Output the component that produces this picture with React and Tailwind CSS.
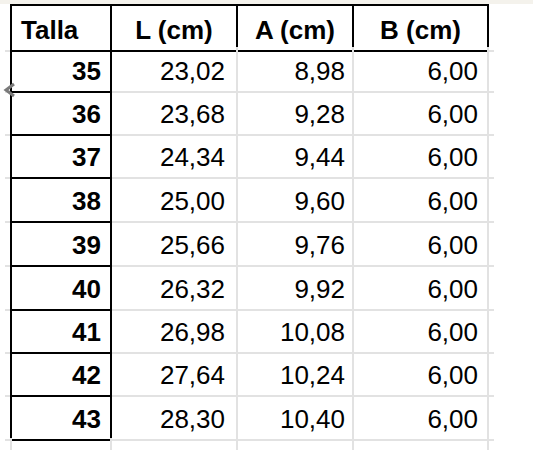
import React from "react";

const rows = [
  ["35", "23,02", "8,98", "6,00"],
  ["36", "23,68", "9,28", "6,00"],
  ["37", "24,34", "9,44", "6,00"],
  ["38", "25,00", "9,60", "6,00"],
  ["39", "25,66", "9,76", "6,00"],
  ["40", "26,32", "9,92", "6,00"],
  ["41", "26,98", "10,08", "6,00"],
  ["42", "27,64", "10,24", "6,00"],
  ["43", "28,30", "10,40", "6,00"],
];

const heights = ["h-[43px]", "h-[43px]", "h-[44px]", "h-[44px]", "h-[44px]", "h-[43px]", "h-[43px]", "h-[44px]", "h-[43px]"];

const grid = "grid grid-cols-[5px_102px_126px_116px_135px_5px]";

export default function App() {
  return (
    <div className="w-[533px] h-[468px] bg-white relative overflow-hidden text-black" style={{ fontFamily: '"Liberation Sans", Arial, sans-serif' }}>
      <div className="h-[4px] bg-[#f4f2ec]" />
      <div className="pl-[5px]">
        {/* header */}
        <div className={`${grid} h-[43px] text-[26px] font-bold`}>
          <div className="border-b-2 border-[#e2e2e2]" />
          <div className="flex items-center pt-[5px] pl-[9px] border-2 border-black">Talla</div>
          <div className="flex items-center justify-center pt-[5px] border-y-2 border-r-2 border-black">L (cm)</div>
          <div className="flex items-center justify-center pt-[5px] border-y-2 border-r-2 border-black">A (cm)</div>
          <div className="flex items-center justify-center pt-[5px] border-y-2 border-r-2 border-black">B (cm)</div>
          <div className="border-b-2 border-[#e2e2e2]" />
        </div>
        {rows.map((r, i) => (
          <div key={r[0]} className={`${grid} ${heights[i]} text-[26px]`}>
            <div className="border-b-2 border-[#e2e2e2]" />
            <div className="flex items-center justify-end pt-[5px] pr-[9px] font-bold border-x-2 border-b-2 border-black">{r[0]}</div>
            <div className="flex items-center justify-end pt-[5px] pr-[11px] border-r-2 border-b-2 border-[#e2e2e2]">{r[1]}</div>
            <div className="flex items-center justify-end pt-[5px] pr-[7px] border-r-2 border-b-2 border-[#e2e2e2]">{r[2]}</div>
            <div className="flex items-center justify-end pt-[5px] pr-[9px] border-r-2 border-b-2 border-[#e2e2e2]">{r[3]}</div>
            <div className="border-b-2 border-[#e2e2e2]" />
          </div>
        ))}
        <div className={`${grid} h-[12px]`}>
          <div />
          <div className="border-x-2 border-[#e2e2e2]" />
          <div className="border-r-2 border-[#e2e2e2]" />
          <div className="border-r-2 border-[#e2e2e2]" />
          <div className="border-r-2 border-[#e2e2e2]" />
          <div />
        </div>
      </div>
      <svg className="absolute left-[2px] top-[82px]" width="14" height="16" viewBox="0 0 14 16">
        <path d="M12 2 L4 8 L12 14" fill="none" stroke="#7a7a7a" strokeWidth="3" strokeLinecap="butt" strokeLinejoin="miter" />
      </svg>
    </div>
  );
}
